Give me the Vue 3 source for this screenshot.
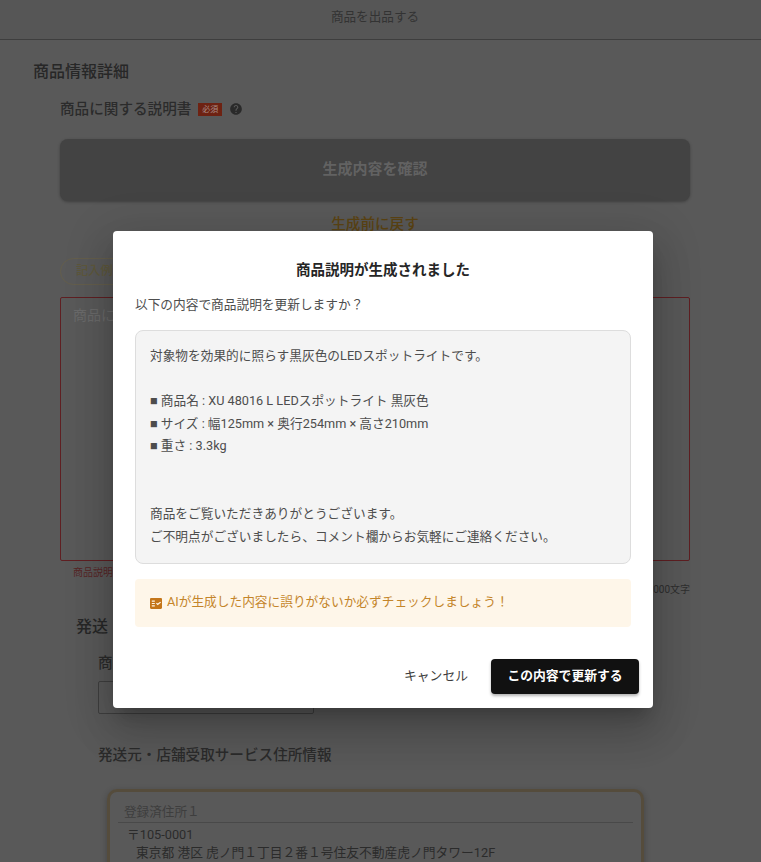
<template>
  <div class="page">
    <header class="app-bar">商品を出品する</header>

    <main class="form">
      <h2 class="section-title">商品情報詳細</h2>

      <section class="desc-block">
        <div class="label-row">
          <span class="label">商品に関する説明書</span>
          <span class="required">必須</span>
          <svg class="help" viewBox="0 0 24 24"><path :d="helpPath" /></svg>
        </div>
        <button class="generate-btn">生成内容を確認</button>
        <div class="revert">生成前に戻す</div>
        <div class="chip">記入例</div>
        <div class="textarea">商品に</div>
        <div class="hint-row">
          <span class="error">商品説明</span>
          <span class="count">0 / 3000文字</span>
        </div>
      </section>

      <h2 class="section-title shipping-title">発送</h2>
      <section class="shipping">
        <div class="label name-label">商品</div>
        <div class="select"></div>
        <div class="label address-label">発送元・店舗受取サービス住所情報</div>
        <div class="address-card">
          <div class="address-head">登録済住所１</div>
          <div class="zip">〒105-0001</div>
          <div class="address">東京都 港区 虎ノ門１丁目２番１号住友不動産虎ノ門タワー12F</div>
        </div>
      </section>
    </main>

    <div class="overlay">
      <div class="dialog">
        <h3 class="dialog-title">商品説明が生成されました</h3>
        <p class="dialog-lead">以下の内容で商品説明を更新しますか？</p>
        <div class="preview">
          <div v-for="(line, i) in previewLines" :key="i" class="preview-line">{{ line }}</div>
        </div>
        <div class="notice">
          <svg class="notice-icon" viewBox="2 3 20 18"><path :d="factCheckPath" /></svg>
          <span class="notice-text">AIが生成した内容に誤りがないか必ずチェックしましょう！</span>
        </div>
        <div class="actions">
          <button class="cancel">キャンセル</button>
          <button class="confirm">この内容で更新する</button>
        </div>
      </div>
    </div>
  </div>
</template>

<script setup>
const helpPath = "M12 2C6.48 2 2 6.48 2 12s4.48 10 10 10 10-4.48 10-10S17.52 2 12 2zm1 17h-2v-2h2v2zm2.07-7.75l-.9.92C13.45 12.9 13 13.5 13 15h-2v-.5c0-1.1.45-2.1 1.17-2.83l1.24-1.26c.37-.36.59-.86.59-1.41 0-1.1-.9-2-2-2s-2 .9-2 2H8c0-2.21 1.79-4 4-4s4 1.79 4 4c0 .88-.36 1.68-.93 2.25z";
const factCheckPath = "M20 3H4c-1.1 0-2 .9-2 2v14c0 1.1.9 2 2 2h16c1.1 0 2-.9 2-2V5c0-1.1-.9-2-2-2zM10 17H5v-2h5v2zm0-4H5v-2h5v2zm0-4H5V7h5v2zm4.82 6L12 12.16l1.41-1.41 1.41 1.42L18.99 9l1.42 1.42L14.82 15z";

const previewLines = [
  "対象物を効果的に照らす黒灰色のLEDスポットライトです。",
  "\u00a0",
  "■ 商品名 : XU 48016 L LEDスポットライト 黒灰色",
  "■ サイズ : 幅125mm × 奥行254mm × 高さ210mm",
  "■ 重さ : 3.3kg",
  "\u00a0",
  "\u00a0",
  "商品をご覧いただきありがとうございます。",
  "ご不明点がございましたら、コメント欄からお気軽にご連絡ください。",
];
</script>

<style>
html,
body {
  margin: 0;
  overflow: hidden;
}
</style>

<style scoped>
.page {
  position: relative;
  width: 761px;
  height: 862px;
  overflow: hidden;
  background: #595959;
  color: #2b2b2b;
  font-family: Roboto, "Liberation Sans", "Noto Sans CJK JP", sans-serif;
}

.app-bar {
  height: 39px;
  padding-right: 11px;
  border-bottom: 1px solid #3e3e3e;
  background: #565656;
  text-align: center;
  font-size: 12.6px;
  line-height: 34px;
  color: #333;
}

.form {
  padding: 20px 71px 0 33px;
}

.section-title {
  margin: 0;
  font-size: 16px;
  line-height: 24px;
  font-weight: 500;
  color: #272727;
}

.desc-block {
  margin-left: 27px;
}

.label-row {
  display: flex;
  align-items: center;
  height: 20px;
  margin-top: 15px;
}

.label {
  font-size: 14.6px;
  line-height: 20px;
  font-weight: 500;
  color: #2b2b2b;
}

.required {
  margin-left: 7px;
  width: 24px;
  height: 13px;
  background: #6e2212;
  color: #a88d86;
  font-size: 8px;
  line-height: 13px;
  text-align: center;
}

.help {
  width: 14px;
  height: 14px;
  margin-left: 7px;
  fill: #2a2a2a;
}

.generate-btn {
  display: block;
  width: 630px;
  height: 62px;
  margin-top: 20px;
  padding: 0 0 2px;
  border: 0;
  border-radius: 8px;
  background: #434343;
  box-shadow: 0 1px 3px rgba(0, 0, 0, 0.3);
  color: #626262;
  font: 700 15px/60px Roboto, "Noto Sans CJK JP", sans-serif;
}

.revert {
  margin-top: 13px;
  text-align: center;
  font-size: 14.6px;
  line-height: 20px;
  font-weight: 500;
  color: #5c4413;
}

.chip {
  box-sizing: border-box;
  width: 80px;
  height: 27px;
  margin-top: 24px;
  padding-left: 15px;
  border: 1px solid #645e4c;
  border-radius: 14px;
  font-size: 12.3px;
  line-height: 25px;
  font-weight: 500;
  color: #5e583c;
}

.textarea {
  box-sizing: border-box;
  height: 264px;
  margin-top: 12px;
  padding: 7px 12px;
  border: 1px solid #5f1f22;
  border-radius: 2px;
  font-size: 14px;
  line-height: 20px;
  color: #6a6a6a;
}

.hint-row {
  display: flex;
  justify-content: space-between;
  padding-left: 13px;
  font-size: 10px;
  line-height: 14px;
}

.error {
  margin-top: 5px;
  color: #572526;
}

.count {
  margin-top: 22px;
  color: #2e2e2e;
}

.shipping-title {
  margin: 18px 0 0 43px;
}

.shipping {
  margin-left: 65px;
}

.name-label {
  margin-top: 14px;
}

.select {
  box-sizing: border-box;
  width: 216px;
  height: 33px;
  margin-top: 8px;
  padding-left: 12px;
  border: 1px solid #3f3f3f;
  border-radius: 2px;
  font-size: 12px;
  line-height: 31px;
  color: #3f3f3f;
}

.address-label {
  margin-top: 31px;
}

.address-card {
  box-sizing: border-box;
  width: 537px;
  height: 120px;
  margin: 24px 0 0 9px;
  padding: 10px 8px;
  border: 3px solid #554c3c;
  border-radius: 10px;
  box-shadow: 0 2px 6px rgba(0, 0, 0, 0.25);
}

.address-head {
  padding-left: 6px;
  border-bottom: 1px solid #494949;
  font-size: 12.6px;
  line-height: 20px;
  color: #3e3e3e;
}

.zip {
  margin-top: 2px;
  padding-left: 9px;
  font-size: 12.75px;
  line-height: 19px;
}

.address {
  padding-left: 18px;
  font-size: 12.75px;
  line-height: 18px;
}

.overlay {
  position: absolute;
  inset: 0;
  display: flex;
  justify-content: center;
  align-items: flex-start;
  padding-top: 231px;
  box-sizing: border-box;
}

.dialog {
  box-sizing: border-box;
  width: 540px;
  height: 477px;
  margin-left: 5px;
  padding: 29px 22px 0;
  border-radius: 4px;
  background: #fff;
  box-shadow:
    0 11px 15px -7px rgba(0, 0, 0, 0.2),
    0 24px 38px 3px rgba(0, 0, 0, 0.14),
    0 9px 46px 8px rgba(0, 0, 0, 0.12);
}

.dialog-title {
  margin: 0;
  text-align: center;
  font-size: 14.5px;
  line-height: 22px;
  font-weight: 700;
  color: #262626;
}

.dialog-lead {
  margin: 13px 0 0;
  font-size: 12.7px;
  line-height: 20px;
  color: #4d4d4d;
}

.preview {
  box-sizing: border-box;
  height: 234px;
  margin-top: 15px;
  padding: 14px 14px;
  border: 1px solid #ddd;
  border-radius: 8px;
  background: #f4f4f4;
  font-size: 12.7px;
  line-height: 22.6px;
  color: #4d4d4d;
}

.notice {
  display: flex;
  align-items: center;
  height: 48px;
  margin-top: 15px;
  padding-left: 15px;
  border-radius: 4px;
  background: #fef6e9;
  font-size: 12.7px;
  color: #c4852a;
}

.notice-icon {
  width: 12px;
  height: 11px;
  margin-right: 5px;
  fill: #c4761a;
}

.notice-text {
  margin-bottom: 6px;
}

.actions {
  display: flex;
  justify-content: flex-end;
  align-items: center;
  gap: 7px;
  margin: 32px -8px 0 0;
}

.cancel,
.confirm {
  height: 35px;
  border: 0;
  border-radius: 4px;
  font: 400 12.8px/33px Roboto, "Noto Sans CJK JP", sans-serif;
  padding: 0 16px 2px;
}

.cancel {
  background: transparent;
  color: #3d3d3d;
}

.confirm {
  width: 148px;
  background: #111;
  color: #fff;
  font-weight: 700;
  box-shadow: 0 2px 3px rgba(0, 0, 0, 0.3);
}
</style>
